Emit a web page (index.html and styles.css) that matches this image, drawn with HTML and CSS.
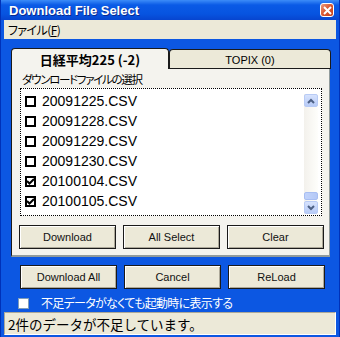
FILE: index.html
```html
<!DOCTYPE html>
<html lang="ja">
<head>
    <meta charset="UTF-8">
    <title>Download File Select</title>
    <link rel="stylesheet" href="styles.css">
</head>
<body>
    <div class="window">
        <!-- Title bar -->
        <div class="titlebar">
            <span class="title">Download File Select</span>
            <span class="close">
                <svg width="9" height="9" viewBox="0 0 9 9"><path d="M1 1 L8 8 M8 1 L1 8" stroke="#fff" stroke-width="2"/></svg>
            </span>
        </div>

        <!-- Menu -->
        <div class="menubar">
            <span class="menu">ファイル(<u>F</u>)</span>
        </div>

        <div class="client">
            <!-- Tabs -->
            <div class="tabs">
                <div class="tabrow">
                    <div class="tab active">日経平均225 (-2)</div>
                    <div class="tab">TOPIX (0)</div>
                </div>
                <div class="panel">
                    <div class="caption">ダウンロードファイルの選択</div>
                    <div class="listbox">
                        <div class="items">
                            <div class="item"><span class="box"></span>20091225.CSV</div>
                            <div class="item"><span class="box"></span>20091228.CSV</div>
                            <div class="item"><span class="box"></span>20091229.CSV</div>
                            <div class="item"><span class="box"></span>20091230.CSV</div>
                            <div class="item"><span class="box checked"><svg width="9" height="9" viewBox="0 0 9 9"><path d="M1 4 L3.5 6.5 L8 2" fill="none" stroke="#000" stroke-width="2"/></svg></span>20100104.CSV</div>
                            <div class="item"><span class="box checked"><svg width="9" height="9" viewBox="0 0 9 9"><path d="M1 4 L3.5 6.5 L8 2" fill="none" stroke="#000" stroke-width="2"/></svg></span>20100105.CSV</div>
                        </div>
                        <div class="scrollbar">
                            <div class="sbtn"><svg width="8" height="6" viewBox="0 0 8 6"><path d="M1 5 L4 2 L7 5" fill="none" stroke="#4d6185" stroke-width="2"/></svg></div>
                            <div class="track"></div>
                            <div class="thumb"></div>
                            <div class="sbtn"><svg width="8" height="6" viewBox="0 0 8 6"><path d="M1 1 L4 4 L7 1" fill="none" stroke="#4d6185" stroke-width="2"/></svg></div>
                        </div>
                    </div>
                    <div class="buttons">
                        <button>Download</button>
                        <button>All Select</button>
                        <button>Clear</button>
                    </div>
                </div>
            </div>

            <div class="buttons outer">
                <button>Download All</button>
                <button>Cancel</button>
                <button>ReLoad</button>
            </div>

            <label class="option"><span class="optbox"></span>不足データがなくても起動時に表示する</label>
        </div>

        <!-- Status bar -->
        <div class="status">2件のデータが不足しています。</div>
    </div>
</body>
</html>
```

FILE: styles.css
```css
* {
    margin: 0;
    padding: 0;
    box-sizing: border-box;
}

body {
    width: 340px;
    height: 337px;
    overflow: hidden;
    font-family: 'Liberation Sans', 'Noto Sans CJK JP', sans-serif;
}

.window {
    width: 340px;
    height: 337px;
    background: #0c57e2;
    display: flex;
    flex-direction: column;
    padding: 0 3px 2px;
    border-left: 1px solid #0031b8;
    border-right: 1px solid #0031b8;
}

.titlebar {
    height: 20px;
    margin: 0 -3px;
    padding: 0 5px 0 8px;
    display: flex;
    align-items: center;
    justify-content: space-between;
    background: linear-gradient(#3c8cf8, #0a5ae6 25%, #0754e0 70%, #0745cf);
}

.title {
    color: #fff;
    font-weight: bold;
    font-size: 13px;
    text-shadow: 1px 1px 0 #0a2a90;
}

.close {
    width: 14px;
    height: 14px;
    border: 1px solid #fff;
    border-radius: 3px;
    background: linear-gradient(135deg, #ec9b7e, #d9552f 50%, #c2401c);
    display: flex;
    align-items: center;
    justify-content: center;
}

.menubar {
    height: 19px;
    background: #ece9d8;
    display: flex;
    align-items: center;
    padding-left: 4px;
}

.menu {
    font-family: 'Noto Sans CJK JP', sans-serif;
    font-size: 12px;
    font-feature-settings: "palt";
    letter-spacing: -0.6px;
    line-height: 1;
}

.client {
    flex: 1;
    padding: 9px 0 0 7px;
}

.tabs {
    width: 320px;
}

.tabrow {
    display: flex;
    height: 21px;
    align-items: flex-end;
}

.tab {
    height: 20px;
    flex: 1;
    background: #ece9d8;
    border: 1px solid #1a1a1a;
    border-bottom: none;
    border-radius: 4px 4px 0 0;
    display: flex;
    align-items: center;
    justify-content: center;
    font-size: 11px;
    box-shadow: inset 0 -1px 0 #1a1a1a;
}

.tab.active {
    flex: 0 0 158px;
    height: 21px;
    background: #f4f3ee;
    font-family: 'Noto Sans CJK JP', sans-serif;
    font-weight: bold;
    font-size: 13px;
    box-shadow: none;
}

.panel {
    height: 188px;
    width: 319px;
    background: #f4f3ee;
    border-left: 1px solid #1a1a1a;
    border-right: 1px solid #919b9c;
    border-bottom: 2px solid #919b9c;
    padding: 3px 0 0 8px;
}

.caption {
    font-family: 'Noto Sans CJK JP', sans-serif;
    font-size: 11.5px;
    font-feature-settings: "palt";
    letter-spacing: -1.3px;
    height: 16px;
    line-height: 14px;
    padding-left: 2px;
}

.listbox {
    width: 302px;
    height: 128px;
    background: #fff;
    border: 1px dotted #000;
    display: flex;
}

.items {
    flex: 1;
    padding: 2px 0 0 4px;
}

.item {
    height: 20px;
    display: flex;
    align-items: center;
    gap: 6px;
    font-size: 14px;
}

.box {
    width: 11px;
    height: 11px;
    border: 2px solid #000;
    display: flex;
    align-items: center;
    justify-content: center;
}

.box svg {
    flex: none;
}

.scrollbar {
    width: 14px;
    margin: 5px 3px 1px 0;
    display: flex;
    flex-direction: column;
    background: linear-gradient(90deg, #f3f1ec, #fefefb);
}

.sbtn {
    height: 13px;
    background: linear-gradient(#d6e2fd, #b7cbf7);
    border: 1px solid #b8cbf5;
    border-radius: 2px;
    display: flex;
    align-items: center;
    justify-content: center;
}

.track {
    flex: 1;
}

.thumb {
    height: 8px;
    margin-bottom: 1px;
    background: linear-gradient(90deg, #c1d3fb, #b4c8f6);
    border: 1px solid #a8bef2;
    border-radius: 2px;
}

.buttons {
    display: flex;
    gap: 7px;
    margin-top: 9px;
    margin-left: -1px;
}

.buttons button {
    width: 97px;
    height: 24px;
    background: #ece9d8;
    border: 1px solid #1a1a1a;
    box-shadow: inset 1px 1px 0 #fff, inset -1px -1px 0 #aca899;
    font-family: 'Liberation Sans', sans-serif;
    font-size: 11px;
    font-weight: normal;
    color: #111;
}

.buttons.outer {
    margin-top: 8px;
    margin-left: 9px;
}

.option {
    display: flex;
    align-items: center;
    gap: 12px;
    margin: 7px 0 0 7px;
    color: #fff;
    font-family: 'Noto Sans CJK JP', sans-serif;
    font-size: 12px;
    font-feature-settings: "palt";
    letter-spacing: -0.7px;
    line-height: 14px;
}

.optbox {
    width: 11px;
    height: 11px;
    background: #fff;
    border: 1px solid #7f9db9;
}

.status {
    height: 23px;
    background: #ece9d8;
    border: 1px solid;
    border-color: #aca899 #fff #fff #aca899;
    padding-left: 3px;
    display: flex;
    align-items: center;
    font-family: 'Noto Sans CJK JP', sans-serif;
    font-size: 13.5px;
}
```
